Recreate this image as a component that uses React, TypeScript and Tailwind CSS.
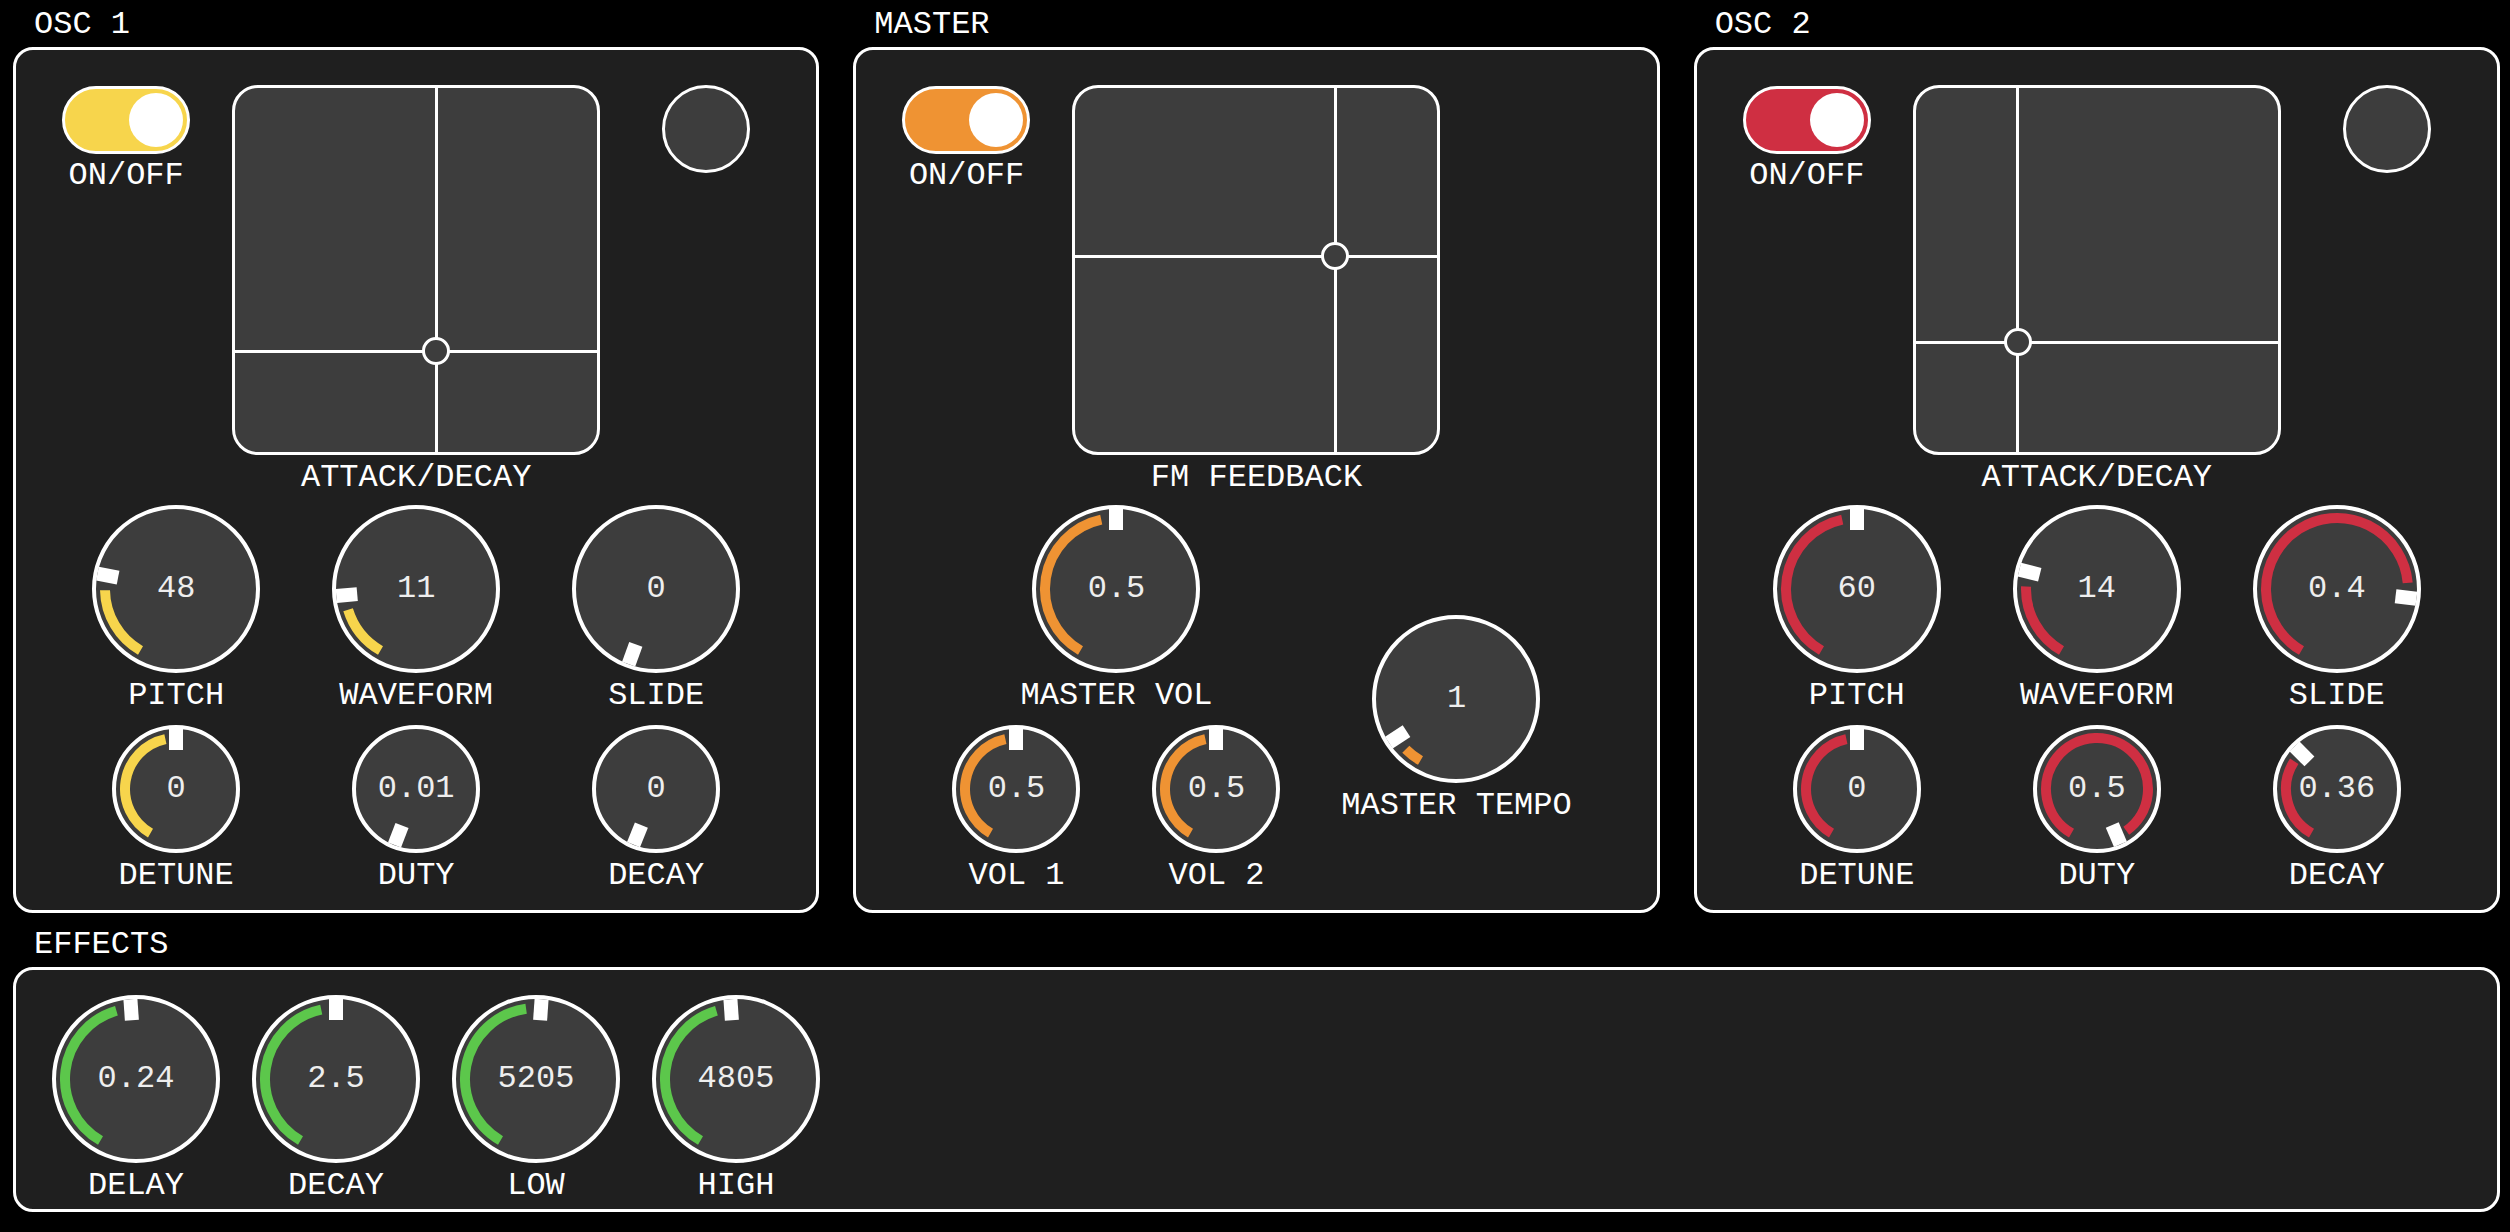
import React from 'react';

type KnobSpec = { label: string; value: string; angle: number };

const YELLOW = '#f7d54c';
const ORANGE = '#ef9333';
const RED = '#cf2f42';
const GREEN = '#5cc74b';

function Knob({ value, angle, color, big }: { value: string; angle: number; color: string; big?: boolean }) {
  const size = big ? 168 : 128;
  const c = size / 2;
  const rArc = c - 13;
  const start = -150;
  const end = angle - 12;
  const pt = (a: number, r: number) => {
    const rad = (a * Math.PI) / 180;
    return [c + r * Math.sin(rad), c - r * Math.cos(rad)];
  };
  let arc = null;
  if (end > start) {
    const [x1, y1] = pt(start, rArc);
    const [x2, y2] = pt(end, rArc);
    const large = end - start > 180 ? 1 : 0;
    arc = (
      <path
        d={`M ${x1} ${y1} A ${rArc} ${rArc} 0 ${large} 1 ${x2} ${y2}`}
        stroke={color}
        strokeWidth={10}
        fill="none"
      />
    );
  }
  return (
    <div
      className={
        big
          ? 'relative flex h-[168px] w-[168px] items-center justify-center'
          : 'relative flex h-[128px] w-[128px] items-center justify-center'
      }
    >
      <svg className="absolute inset-0" width={size} height={size}>
        <circle cx={c} cy={c} r={c - 2} fill="#3d3d3d" stroke="#ffffff" strokeWidth={4} />
        {arc}
        <rect x={c - 7} y={4} width={14} height={21} fill="#ffffff" transform={`rotate(${angle} ${c} ${c})`} />
      </svg>
      <span className="relative text-[32px] leading-[36px] text-[#eeeeee]">{value}</span>
    </div>
  );
}

function KnobCell({ k, color, big, width }: { k: KnobSpec; color: string; big?: boolean; width: string }) {
  return (
    <div className={`flex flex-col items-center ${width}`}>
      <Knob value={k.value} angle={k.angle} color={color} big={big} />
      <div className="mt-[5px] h-[36px] whitespace-nowrap leading-[36px] text-white">{k.label}</div>
    </div>
  );
}

function Toggle({ fill }: { fill: string }) {
  return (
    <div className={`mt-[1px] flex h-[68px] w-[128px] items-center justify-end rounded-full border-[3px] border-white pr-[4px] ${fill}`}>
      <div className="h-[54px] w-[54px] rounded-full bg-white" />
    </div>
  );
}

function Pad({ x, y }: { x: number; y: number }) {
  return (
    <div className="relative h-[370px] w-[368px] overflow-hidden rounded-[26px] border-[3px] border-white bg-[#3d3d3d]">
      <div className="absolute top-0 bottom-0 w-[3px] bg-white" style={{ left: x - 1.5 }} />
      <div className="absolute left-0 right-0 h-[3px] bg-white" style={{ top: y - 1.5 }} />
      <div
        className="absolute h-[28px] w-[28px] rounded-full border-[3px] border-white bg-[#3d3d3d]"
        style={{ left: x - 14, top: y - 14 }}
      />
    </div>
  );
}

function TopRow({ fill, padLabel, x, y, led }: { fill: string; padLabel: string; x: number; y: number; led?: boolean }) {
  return (
    <div className="flex items-start justify-center gap-[26px]">
      <div className="flex w-[160px] flex-col items-center">
        <Toggle fill={fill} />
        <div className="mt-[4px] h-[36px] leading-[36px]">ON/OFF</div>
      </div>
      <div className="flex flex-col items-center">
        <Pad x={x} y={y} />
        <div className="mt-[5px] h-[36px] leading-[36px]">{padLabel}</div>
      </div>
      <div className="flex w-[160px] justify-center">
        {led && <div className="h-[88px] w-[88px] rounded-full border-[3px] border-white bg-[#3d3d3d]" />}
      </div>
    </div>
  );
}

function Section({ title, children, className }: { title: string; children: React.ReactNode; className: string }) {
  return (
    <div className="flex flex-col">
      <div className="h-[36px] pl-[21px] leading-[36px]">{title}</div>
      <div className={`mt-[4px] flex-1 rounded-[20px] border-[3px] border-white bg-[#1f1f1f] ${className}`}>
        {children}
      </div>
    </div>
  );
}

function OscPanel({ title, fill, color, x, y, top, bottom }: {
  title: string; fill: string; color: string; x: number; y: number; top: KnobSpec[]; bottom: KnobSpec[];
}) {
  return (
    <Section title={title} className="pt-[35px] pb-[16px]">
      <TopRow fill={fill} padLabel="ATTACK/DECAY" x={x} y={y} led />
      <div className="mt-[9px] flex justify-center">
        {top.map((k) => (
          <KnobCell key={k.label} k={k} color={color} big width="w-[240px]" />
        ))}
      </div>
      <div className="mt-[11px] flex justify-center">
        {bottom.map((k) => (
          <KnobCell key={k.label} k={k} color={color} width="w-[240px]" />
        ))}
      </div>
    </Section>
  );
}

export default function App() {
  const effects: KnobSpec[] = [
    { label: 'DELAY', value: '0.24', angle: -4 },
    { label: 'DECAY', value: '2.5', angle: 0 },
    { label: 'LOW', value: '5205', angle: 4 },
    { label: 'HIGH', value: '4805', angle: -4 },
  ];

  return (
    <div className="min-h-screen bg-black pt-[7px] pl-[13px] pr-[10px] font-['Liberation_Mono',monospace] text-[32px] text-white">
      <div className="grid grid-cols-3 gap-[34px]">
        <OscPanel
          title="OSC 1"
          fill="bg-[#f7d54c]"
          color={YELLOW}
          x={201}
          y={263}
          top={[
            { label: 'PITCH', value: '48', angle: -79 },
            { label: 'WAVEFORM', value: '11', angle: -95 },
            { label: 'SLIDE', value: '0', angle: -160 },
          ]}
          bottom={[
            { label: 'DETUNE', value: '0', angle: 0 },
            { label: 'DUTY', value: '0.01', angle: -159 },
            { label: 'DECAY', value: '0', angle: -158 },
          ]}
        />

        <Section title="MASTER" className="pt-[35px] pb-[16px]">
          <TopRow fill="bg-[#ef9333]" padLabel="FM FEEDBACK" x={260} y={168} />
          <div className="mt-[9px] flex justify-center">
            <div className="flex w-[400px] flex-col items-center">
              <KnobCell k={{ label: 'MASTER VOL', value: '0.5', angle: 0 }} color={ORANGE} big width="w-[400px]" />
              <div className="mt-[11px] flex">
                <KnobCell k={{ label: 'VOL 1', value: '0.5', angle: 0 }} color={ORANGE} width="w-[200px]" />
                <KnobCell k={{ label: 'VOL 2', value: '0.5', angle: 0 }} color={ORANGE} width="w-[200px]" />
              </div>
            </div>
            <div className="pt-[110px]">
              <KnobCell k={{ label: 'MASTER TEMPO', value: '1', angle: -123 }} color={ORANGE} big width="w-[280px]" />
            </div>
          </div>
        </Section>

        <OscPanel
          title="OSC 2"
          fill="bg-[#cf2f42]"
          color={RED}
          x={102}
          y={254}
          top={[
            { label: 'PITCH', value: '60', angle: 0 },
            { label: 'WAVEFORM', value: '14', angle: -76 },
            { label: 'SLIDE', value: '0.4', angle: 97 },
          ]}
          bottom={[
            { label: 'DETUNE', value: '0', angle: 0 },
            { label: 'DUTY', value: '0.5', angle: 157 },
            { label: 'DECAY', value: '0.36', angle: -45 },
          ]}
        />
      </div>

      <div className="mt-[14px]">
        <Section title="EFFECTS" className="flex pt-[25px] pb-[5px] pl-[20px]">
          {effects.map((k) => (
            <KnobCell key={k.label} k={k} color={GREEN} big width="w-[200px]" />
          ))}
        </Section>
      </div>
    </div>
  );
}
